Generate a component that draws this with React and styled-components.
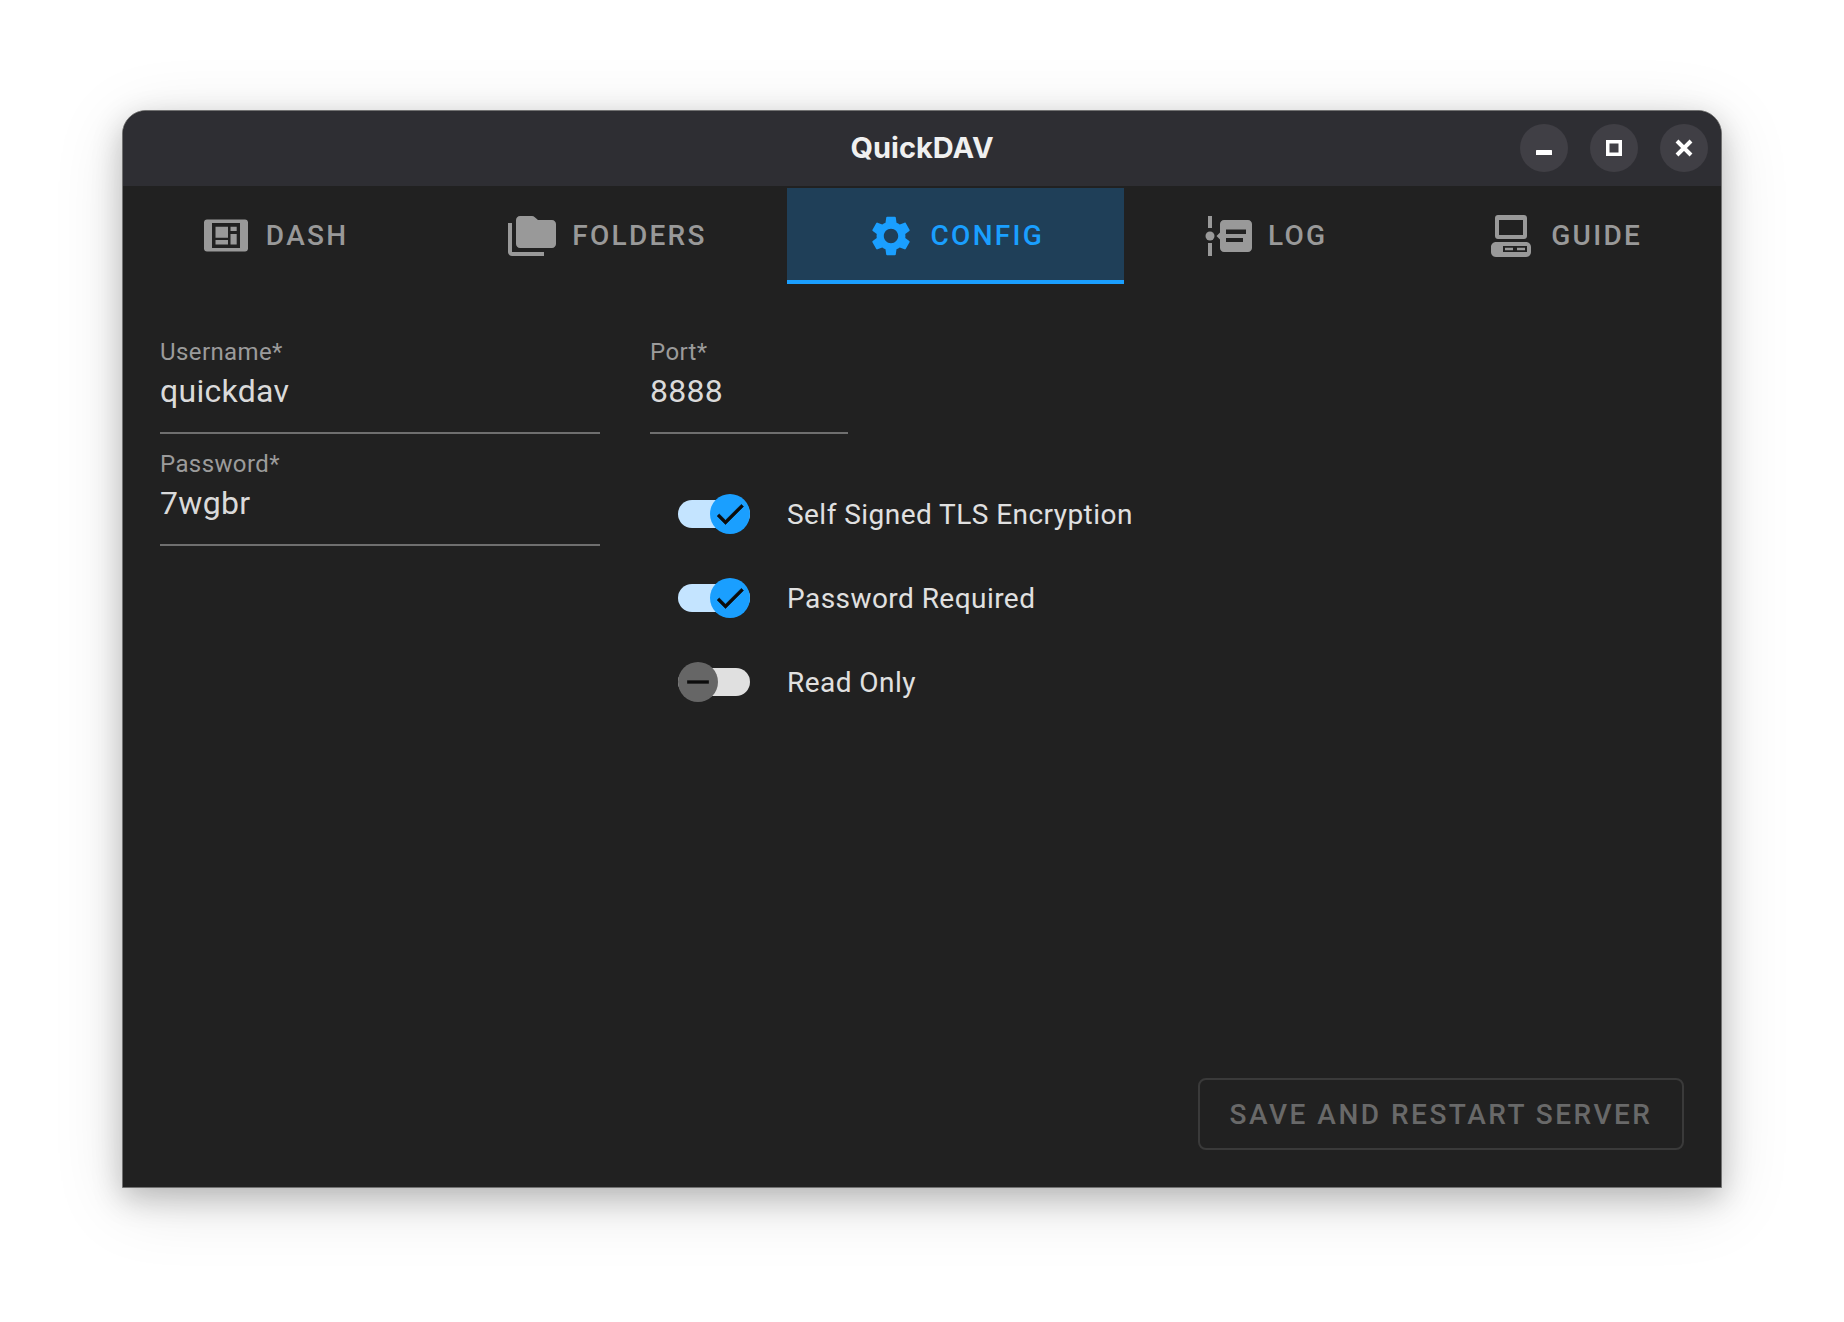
import React from 'react';
import styled, { createGlobalStyle } from 'styled-components';

const GlobalStyle = createGlobalStyle`
  html, body {
    margin: 0;
    background: #fff;
  }
`;

const Page = styled.div`
  width: 1844px;
  height: 1322px;
  padding: 110px 122px 0;
  box-sizing: border-box;
  background: #fff;
  font-family: Roboto, "Liberation Sans", sans-serif;
`;

const Window = styled.div`
  width: 1600px;
  height: 1078px;
  box-sizing: border-box;
  display: flex;
  flex-direction: column;
  overflow: hidden;
  background: #212121;
  border: 1px solid #727272;
  border-radius: 24px 24px 0 0;
  box-shadow: 0 10px 30px rgba(0, 0, 0, 0.22), 0 14px 70px rgba(0, 0, 0, 0.13);
`;

const TitleBar = styled.header`
  height: 75px;
  flex: none;
  display: flex;
  align-items: center;
  justify-content: flex-end;
  position: relative;
  gap: 22px;
  padding: 0 13px 1px 0;
  box-sizing: border-box;
  background: #2e2e33;
`;

const Title = styled.h1`
  position: absolute;
  left: 0;
  right: 0;
  top: 19px;
  margin: 0;
  text-align: center;
  font-family: Inter, "Liberation Sans", sans-serif;
  font-size: 29px;
  line-height: 36px;
  font-weight: 700;
  color: #f0f0f0;
`;

const WinButton = styled.button`
  width: 48px;
  height: 48px;
  padding: 0;
  border: none;
  border-radius: 50%;
  display: flex;
  align-items: center;
  justify-content: center;
  background: #403f45;
  color: #fff;
`;

const Tabs = styled.nav`
  display: flex;
  margin: 2px -1px 0;
  height: 96px;
  flex: none;
`;

const Tab = styled.div`
  flex: 1 1 auto;
  display: flex;
  align-items: center;
  justify-content: center;
  gap: 16px;
  box-sizing: border-box;
  font-size: 28px;
  font-weight: 500;
  letter-spacing: 2.3px;
  color: ${(p) => (p.$active ? '#1a9fff' : '#999')};
  background: ${(p) => (p.$active ? '#1f3f58' : 'transparent')};
  border-bottom: 4px solid ${(p) => (p.$active ? '#1a9fff' : 'transparent')};
  padding-top: 3px;
`;

const Body = styled.main`
  flex: 1;
  display: flex;
  flex-direction: column;
  padding: 51px 37px 37px;
  min-height: 0;
`;

const Columns = styled.div`
  display: flex;
  gap: 50px;
  flex: 1;
`;

const LeftColumn = styled.div`
  display: flex;
  flex-direction: column;
  gap: 13px;
  width: 440px;
`;

const RightColumn = styled.div`
  display: flex;
  flex-direction: column;
`;

const Field = styled.div`
  width: ${(p) => p.$width || '100%'};
  height: 99px;
  box-sizing: border-box;
  border-bottom: 2px solid #6f6f6f;
`;

const FieldLabel = styled.div`
  font-size: 24px;
  line-height: 34px;
  letter-spacing: 0.4px;
  color: #9b9b9b;
`;

const FieldValue = styled.div`
  font-size: 32px;
  line-height: 44px;
  letter-spacing: 0.3px;
  color: #dadada;
`;

const Options = styled.div`
  margin-top: 38px;
  display: flex;
  flex-direction: column;
`;

const Option = styled.label`
  height: 84px;
  display: flex;
  align-items: center;
  gap: 37px;
  padding-left: 28px;
  font-size: 28px;
  letter-spacing: 0.45px;
  color: #e0e0e0;
`;

const Switch = styled.span`
  position: relative;
  width: 72px;
  height: 28px;
  border-radius: 14px;
  background: ${(p) => (p.$on ? '#c4e4ff' : '#e0e0e0')};
`;

const Thumb = styled.span`
  position: absolute;
  top: -6px;
  left: ${(p) => (p.$on ? '32px' : '0')};
  width: 40px;
  height: 40px;
  border-radius: 50%;
  display: flex;
  align-items: center;
  justify-content: center;
  background: ${(p) => (p.$on ? '#1a9fff' : '#666')};
  color: #0c0c0c;
`;

const Footer = styled.div`
  display: flex;
  justify-content: flex-end;
`;

const SaveButton = styled.button`
  width: 486px;
  height: 72px;
  padding: 0;
  background: transparent;
  border: 2px solid #3a3a3a;
  border-radius: 8px;
  font-family: inherit;
  font-size: 28px;
  font-weight: 500;
  letter-spacing: 2.5px;
  color: #696969;
`;

const Icon = ({ size = 48, box = 48, children }) => (
  <svg width={size} height={size} viewBox={`0 0 ${box} ${box}`} fill="currentColor">
    {children}
  </svg>
);

const DashIcon = () => (
  <Icon>
    <path
      fillRule="evenodd"
      d="M5 7.500h38c1.700 0 3 1.300 3 3v26c0 1.700-1.300 3-3 3H5c-1.700 0-3-1.300-3-3v-26c0-1.700 1.300-3 3-3zM10 11v25h28V11z"
    />
    <path d="M13.500 14.700H26v11H13.500zM13.500 28H26v4.500H13.500zM28.500 14.700h6.200V19h-6.200zM28.500 22h6.200v10.500h-6.200z" />
  </Icon>
);

const FolderIcon = () => (
  <Icon>
    <path d="M12 4h12c1 0 2 .4 2.800 1.200L30 8h14c2.200 0 4 1.800 4 4v20c0 2.200-1.800 4-4 4H12c-2.200 0-4-1.800-4-4V8c0-2.200 1.800-4 4-4z" />
    <path d="M0 11h4v29h32v4H4c-2.200 0-4-1.800-4-4z" />
  </Icon>
);

const GearIcon = () => (
  <Icon box={24}>
    <path d="M19.14 12.94c.04-.3.06-.61.06-.94 0-.32-.02-.64-.07-.94l2.03-1.58c.18-.14.23-.41.12-.61l-1.92-3.32c-.12-.22-.37-.29-.59-.22l-2.39.96c-.5-.38-1.03-.7-1.62-.94l-.36-2.54c-.04-.24-.24-.41-.48-.41h-3.84c-.24 0-.43.17-.47.41l-.36 2.54c-.59.24-1.13.57-1.62.94l-2.39-.96c-.22-.08-.47 0-.59.22L2.74 8.87c-.12.21-.08.47.12.61l2.03 1.58c-.05.3-.09.63-.09.94s.02.64.07.94l-2.03 1.58c-.18.14-.23.41-.12.61l1.92 3.32c.12.22.37.29.59.22l2.39-.96c.5.38 1.03.7 1.62.94l.36 2.54c.05.24.24.41.48.41h3.84c.24 0 .44-.17.47-.41l.36-2.54c.59-.24 1.13-.56 1.62-.94l2.39.96c.22.08.47 0 .59-.22l1.92-3.32c.12-.22.07-.47-.12-.61l-2.01-1.58zM12 15.600c-1.980 0-3.600-1.620-3.600-3.600s1.620-3.600 3.600-3.600 3.600 1.620 3.600 3.600-1.620 3.600-3.600 3.600z" />
  </Icon>
);

const LogIcon = () => (
  <Icon>
    <path d="M4 4h4v12H4zM4 31h4v13H4z" />
    <circle cx="6" cy="24" r="4.500" />
    <path
      fillRule="evenodd"
      d="M20 8h24c2.200 0 4 1.800 4 4v24c0 2.200-1.800 4-4 4H20c-2.200 0-4-1.800-4-4v-8.500L12.500 24l3.500-3.500V12c0-2.200 1.800-4 4-4zM22 17.500V22h20v-4.500zM22 26v4h17v-4z"
    />
  </Icon>
);

const GuideIcon = () => (
  <Icon>
    <path
      fillRule="evenodd"
      d="M11 3h26c1.700 0 3 1.300 3 3v18c0 1.700-1.300 3-3 3H11c-1.700 0-3-1.300-3-3V6c0-1.700 1.300-3 3-3zM12 8v15h24V8z"
    />
    <path
      fillRule="evenodd"
      d="M9 30h30c2.800 0 5 2.200 5 5v5c0 2.800-2.200 5-5 5H9c-2.800 0-5-2.200-5-5v-5c0-2.800 2.200-5 5-5zM16 34v6h24v-6z"
    />
    <path d="M18 35.700h8v2.600h-8zM30 35.700h8v2.600h-8z" />
  </Icon>
);

const CheckIcon = () => (
  <Icon size={36} box={24}>
    <path
      d="M9 16.170 4.830 12l-1.420 1.410L9 19 21 7l-1.410-1.410z"
      stroke="currentColor"
      strokeWidth="0.4"
    />
  </Icon>
);

const MinusIcon = () => (
  <Icon size={40} box={24}>
    <path d="M5.500 11h13v2h-13z" />
  </Icon>
);

const tabs = [
  { label: 'DASH', icon: <DashIcon /> },
  { label: 'FOLDERS', icon: <FolderIcon /> },
  { label: 'CONFIG', icon: <GearIcon />, active: true },
  { label: 'LOG', icon: <LogIcon /> },
  { label: 'GUIDE', icon: <GuideIcon /> },
];

const options = [
  { label: 'Self Signed TLS Encryption', on: true },
  { label: 'Password Required', on: true },
  { label: 'Read Only', on: false },
];

export default function App() {
  return (
    <Page>
      <GlobalStyle />
      <Window>
        <TitleBar>
          <Title>QuickDAV</Title>
          <WinButton aria-label="Minimize">
            <svg width="16" height="16" viewBox="0 0 16 16" fill="currentColor">
              <rect y="10" width="16" height="5" rx="0.5" />
            </svg>
          </WinButton>
          <WinButton aria-label="Maximize">
            <svg width="16" height="16" viewBox="0 0 16 16" fill="none" stroke="currentColor" strokeWidth="3.5">
              <rect x="1.750" y="1.750" width="12.500" height="12.500" />
            </svg>
          </WinButton>
          <WinButton aria-label="Close">
            <svg width="18" height="18" viewBox="0 0 18 18" fill="none" stroke="currentColor" strokeWidth="4">
              <path d="M2 2l14 14M16 2L2 16" />
            </svg>
          </WinButton>
        </TitleBar>
        <Tabs>
          {tabs.map((t) => (
            <Tab key={t.label} $active={t.active}>
              {t.icon}
              {t.label}
            </Tab>
          ))}
        </Tabs>
        <Body>
          <Columns>
            <LeftColumn>
              <Field>
                <FieldLabel>Username*</FieldLabel>
                <FieldValue>quickdav</FieldValue>
              </Field>
              <Field>
                <FieldLabel>Password*</FieldLabel>
                <FieldValue>7wgbr</FieldValue>
              </Field>
            </LeftColumn>
            <RightColumn>
              <Field $width="198px">
                <FieldLabel>Port*</FieldLabel>
                <FieldValue>8888</FieldValue>
              </Field>
              <Options>
                {options.map((o) => (
                  <Option key={o.label}>
                    <Switch $on={o.on}>
                      <Thumb $on={o.on}>{o.on ? <CheckIcon /> : <MinusIcon />}</Thumb>
                    </Switch>
                    {o.label}
                  </Option>
                ))}
              </Options>
            </RightColumn>
          </Columns>
          <Footer>
            <SaveButton disabled>SAVE AND RESTART SERVER</SaveButton>
          </Footer>
        </Body>
      </Window>
    </Page>
  );
}
